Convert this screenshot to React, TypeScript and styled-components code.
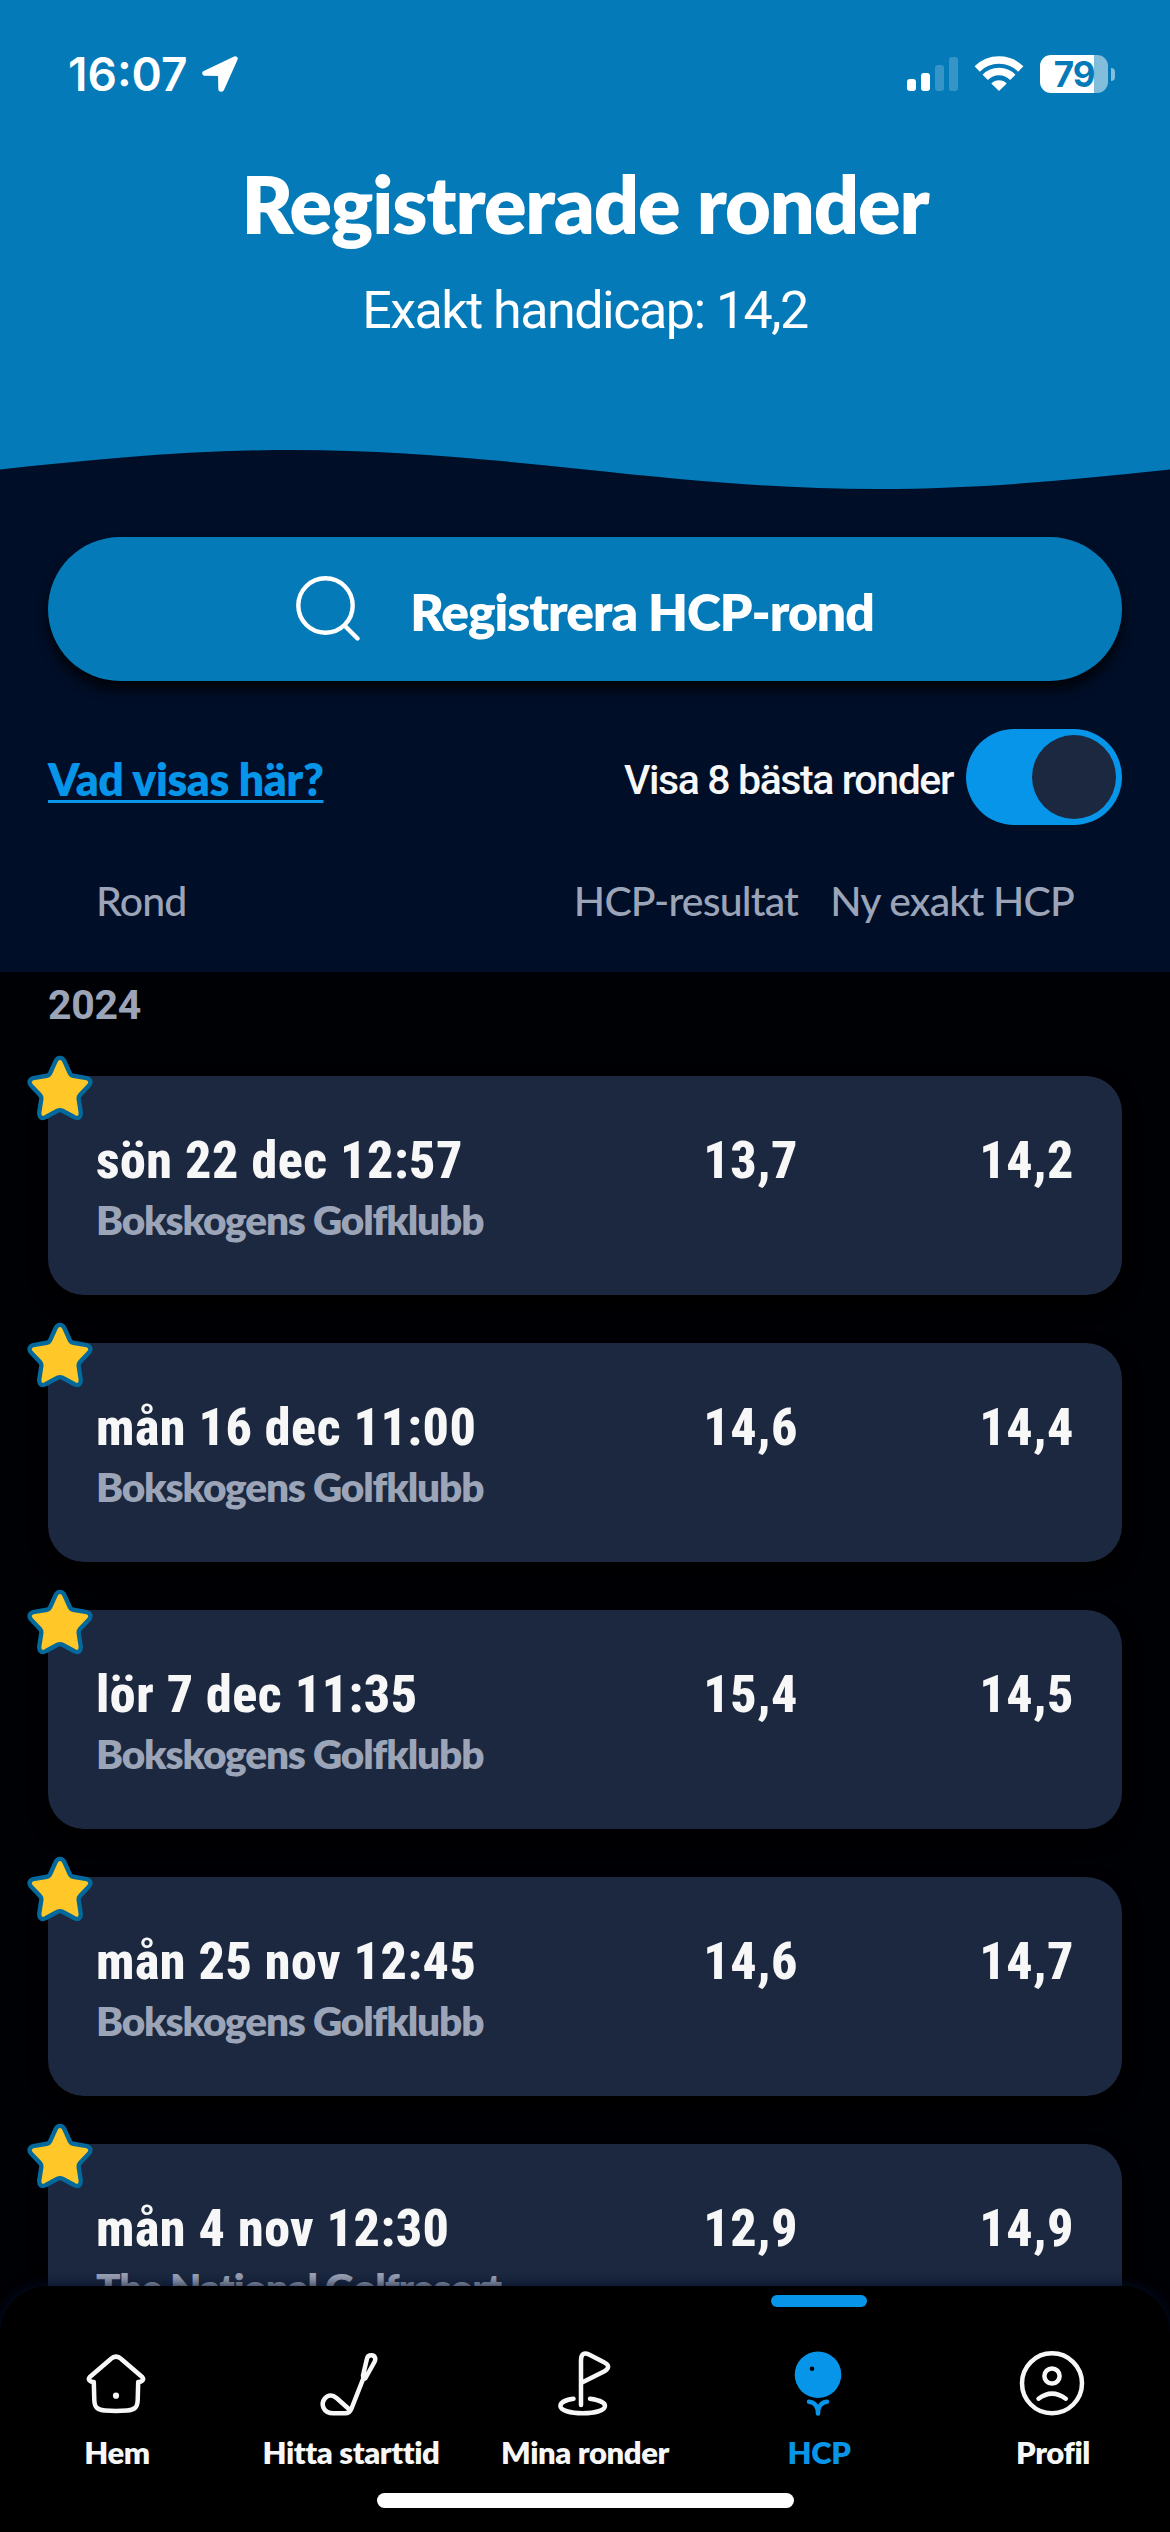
import React from 'react';
import styled, { createGlobalStyle, css } from 'styled-components';

const c = {
  blue: '#047ab8',
  accent: '#0695e8',
  navy: '#000e27',
  night: '#000105',
  card: '#1b283f',
  muted: '#9ca4b8',
  light: '#f7f7f7',
};

const textFont = `Lato, Roboto, 'Liberation Sans', sans-serif`;
const numberFont = `Roboto, 'Liberation Sans', sans-serif`;

const Global = createGlobalStyle`
  *, *::before, *::after { box-sizing: border-box; }
  html, body { margin: 0; padding: 0; background: ${c.night}; }
`;

const Screen = styled.div`
  display: flex;
  flex-direction: column;
  width: 1170px;
  height: 2532px;
  overflow: hidden;
  background: ${c.night};
  color: ${c.light};
  font-family: ${textFont};
`;

const Header = styled.header`
  height: 450px;
  background: ${c.blue};
  color: #fff;
  text-align: center;
`;

const StatusBar = styled.div`
  display: flex;
  align-items: center;
  justify-content: space-between;
  height: 150px;
  padding: 0 55px 2px 68px;
`;

const StatusGroup = styled.div<{ $gap: number }>`
  display: flex;
  align-items: center;
  gap: ${(p) => p.$gap}px;
`;

const Clock = styled.span`
  font: 600 46px/56px Inter, 'Liberation Sans', sans-serif;
`;

const Battery = styled.div`
  display: flex;
  align-items: center;
  gap: 3px;
`;

const BatteryBody = styled.div`
  width: 68px;
  height: 38px;
  border-radius: 11px;
  background: linear-gradient(90deg, #fff 54px, rgba(255, 255, 255, 0.5) 54px);
  color: ${c.blue};
  font: 700 35px/38px Inter, 'Liberation Sans', sans-serif;
  letter-spacing: -1px;
  text-align: center;
`;

const BatteryTip = styled.div`
  width: 4px;
  height: 13px;
  border-radius: 0 4px 4px 0;
  background: rgba(255, 255, 255, 0.5);
`;

const Title = styled.h1`
  margin: 6px 0 0;
  font-size: 79px;
  font-weight: 800;
  letter-spacing: -1.1px;
  line-height: 96px;
`;

const Subtitle = styled.p`
  margin: 29px 0 0;
  font-family: ${numberFont};
  font-size: 52px;
  letter-spacing: -1.5px;
  line-height: 60px;
`;

const Controls = styled.section`
  display: flex;
  flex-direction: column;
  height: 522px;
  background: ${c.navy};
`;

const Wave = styled.svg`
  display: block;
  flex: none;
  width: 1170px;
  height: 39px;
`;

const RegisterButton = styled.button`
  display: flex;
  align-items: center;
  justify-content: center;
  gap: 50px;
  flex: none;
  height: 144px;
  margin: 48px 48px 0;
  padding: 0;
  border: 0;
  border-radius: 72px;
  background: ${c.blue};
  color: #fff;
  font-family: inherit;
  box-shadow: 0 9px 12px rgba(0, 0, 0, 0.75);
`;

const ButtonLabel = styled.span`
  padding-top: 3px;
  font-size: 51.5px;
  font-weight: 800;
  letter-spacing: -1px;
  line-height: 60px;
`;

const FilterRow = styled.div`
  display: flex;
  align-items: center;
  height: 96px;
  margin: 48px 48px 0;
`;

const HelpLink = styled.a`
  margin-right: auto;
  padding-top: 4px;
  color: ${c.accent};
  font-size: 44.5px;
  font-weight: 800;
  letter-spacing: -0.4px;
  line-height: 54px;
  text-decoration: underline;
  text-decoration-thickness: 3px;
  text-underline-offset: 4px;
  text-decoration-skip-ink: none;
`;

const FilterLabel = styled.span`
  padding-top: 5px;
  margin-right: 13px;
  font-family: ${numberFont};
  font-size: 41px;
  font-weight: 500;
  letter-spacing: -1.4px;
  line-height: 48px;
`;

const Toggle = styled.div`
  display: flex;
  justify-content: flex-end;
  width: 156px;
  height: 96px;
  padding: 6px;
  border-radius: 48px;
  background: ${c.accent};
`;

const Knob = styled.div`
  width: 84px;
  height: 84px;
  border-radius: 50%;
  background: ${c.card};
`;

const columns = css`
  display: grid;
  grid-template-columns: minmax(0, 1fr) 300px 276px;
`;

const TableHead = styled.div`
  ${columns}
  margin: 46px 96px 0;
  color: ${c.muted};
  font-size: 41px;
  font-weight: 500;
  letter-spacing: -0.85px;
  line-height: 60px;
`;

const Cell = styled.span<{ $end?: boolean }>`
  text-align: ${(p) => (p.$end ? 'right' : 'left')};
  white-space: nowrap;
`;

const List = styled.main`
  flex: 1;
  min-height: 0;
  overflow: hidden;
  padding: 9px 48px 0;
`;

const Year = styled.h2`
  margin: 0 0 47px;
  color: ${c.muted};
  font-family: ${numberFont};
  font-size: 41px;
  font-weight: 700;
  letter-spacing: -0.3px;
  line-height: 48px;
`;

const Card = styled.article`
  ${columns}
  position: relative;
  height: 219px;
  margin-bottom: 48px;
  padding: 55px 48px 0;
  border-radius: 36px;
  background: ${c.card};
  box-shadow: 0 9px 18px #000;
`;

const StarBadge = styled.svg`
  position: absolute;
  left: -21px;
  top: -21px;
  width: 66px;
  height: 66px;
`;

const When = styled.div`
  font-family: ${numberFont};
  font-size: 52px;
  font-weight: 800;
  font-stretch: 84%;
  letter-spacing: 0.5px;
  line-height: 60px;
  white-space: nowrap;
`;

const Score = styled(When)`
  text-align: right;
`;

const Club = styled.div`
  margin-top: 5px;
  color: ${c.muted};
  font-size: 40.5px;
  font-weight: 800;
  letter-spacing: -1.15px;
  line-height: 48px;
  white-space: nowrap;
`;

const TabBar = styled.nav`
  position: relative;
  display: flex;
  flex-direction: column;
  flex: none;
  height: 246px;
  margin-top: -48px;
  border-radius: 48px 48px 0 0;
  background: #000;
  box-shadow: 0 0 14px ${c.navy};
`;

const Tabs = styled.div`
  display: grid;
  grid-template-columns: repeat(5, 1fr);
`;

const Tab = styled.a<{ $active?: boolean }>`
  display: flex;
  flex-direction: column;
  align-items: center;
  color: ${(p) => (p.$active ? c.accent : c.light)};
`;

const Marker = styled.span<{ $active?: boolean }>`
  width: 96px;
  height: 12px;
  margin: 9px 0 41px;
  border-radius: 6px;
  background: ${(p) => (p.$active ? c.accent : 'transparent')};
`;

const TabIcon = styled.svg`
  width: 72px;
  height: 72px;
  fill: none;
  stroke: currentColor;
  stroke-width: 4.5;
  stroke-linecap: round;
  stroke-linejoin: round;
`;

const TabLabel = styled.span`
  margin-top: 14px;
  font-size: 31px;
  font-weight: 800;
  letter-spacing: -0.4px;
  line-height: 36px;
`;

const HomeIndicator = styled.div`
  width: 417px;
  height: 15px;
  margin: 23px auto 0;
  border-radius: 8px;
  background: #fff;
`;

const rounds = [
  ['sön 22 dec 12:57', 'Bokskogens Golfklubb', '13,7', '14,2'],
  ['mån 16 dec 11:00', 'Bokskogens Golfklubb', '14,6', '14,4'],
  ['lör 7 dec 11:35', 'Bokskogens Golfklubb', '15,4', '14,5'],
  ['mån 25 nov 12:45', 'Bokskogens Golfklubb', '14,6', '14,7'],
  ['mån 4 nov 12:30', 'The National Golfresort', '12,9', '14,9'],
];

const tabs = [
  {
    label: 'Hem',
    icon: (
      <>
        <path d="M12.8 34C9 34 6.5 31.5 8.8 29L29.5 11.2C33 8 37 8 40.5 11.2L61.2 29C63.5 31.5 61 34 57.2 34L56.7 52C56.5 60 53 62 46 62.5C39 63 31 63 24 62.5C17 62 13.5 60 13.3 52Z" />
        <circle cx="35" cy="47.7" r="3.1" fill="currentColor" stroke="none" />
      </>
    ),
  },
  {
    label: 'Hitta starttid',
    icon: (
      <>
        <path d="M48.5 30L36.5 60.5C35.3 63.8 33.5 65.3 30 65.3H18.5C8 65.3 5.5 56 9.8 50.5C13.5 46 18 47 21.5 50L35 62" />
        <path d="M48 27.5L52 10.5C53 6 59.5 6 60.3 10.5C60.4 12 60 13 59.3 14.3L50.5 30Q48.3 32 48 27.5Z" />
      </>
    ),
  },
  {
    label: 'Mina ronder',
    icon: (
      <>
        <path d="M32 57V12C32 6 35 4 40 6.5L55 14.3C60.5 17 60.5 20.5 55 23.5L32 35" />
        <path d="M24.5 50.8C17 51.8 11.4 54.5 11.4 58C11.4 62.3 21 65.3 33.7 65.3S56 62.3 56 58C56 54.5 49 51.8 41 50.8" />
      </>
    ),
  },
  {
    label: 'HCP',
    active: true,
    icon: (
      <>
        <circle cx="35" cy="26.7" r="23.3" fill="currentColor" stroke="none" />
        <circle cx="29" cy="20.7" r="2.3" fill="#000" stroke="none" />
        <path d="M26 53.8C31.5 54.3 35 58.5 35 65.5C35 58.5 38.5 54.3 44 53.8" />
      </>
    ),
  },
  {
    label: 'Profil',
    icon: (
      <>
        <circle cx="35" cy="35.3" r="30" />
        <circle cx="35" cy="28" r="7.6" />
        <path d="M21.5 50.7Q35 40.5 48.8 50.7" />
      </>
    ),
  },
];

export default function App() {
  return (
    <Screen>
      <Global />
      <Header>
        <StatusBar>
          <StatusGroup $gap={14}>
            <Clock>16:07</Clock>
            <svg width="36" height="36" viewBox="0 0 36 36" fill="#fff" stroke="#fff" strokeWidth="5" strokeLinejoin="round">
              <path d="M33.2 2.8L2.8 17.3L18.5 17.5L18.8 33.3L19.6 33.3Z" />
            </svg>
          </StatusGroup>
          <StatusGroup $gap={16}>
            <svg width="51" height="38" viewBox="0 0 51 38" fill="#fff">
              <rect x="0" y="24" width="9" height="12" rx="3" />
              <rect x="14" y="18" width="9" height="18" rx="3" />
              <rect x="28" y="10" width="9" height="26" rx="3" opacity="0.2" />
              <rect x="42" y="2" width="9" height="34" rx="3" opacity="0.2" />
            </svg>
            <svg width="50" height="38" viewBox="0 0 50 38" fill="none" stroke="#fff" strokeWidth="7.5">
              <path d="M3.2 14A31.2 31.2 0 0 1 46.8 14" />
              <path d="M11.2 22.3A19.3 19.3 0 0 1 38.8 22.3" />
              <path d="M25 36L17.3 28.4A11 11 0 0 1 32.7 28.4Z" fill="#fff" stroke="none" />
            </svg>
            <Battery>
              <BatteryBody>79</BatteryBody>
              <BatteryTip />
            </Battery>
          </StatusGroup>
        </StatusBar>
        <Title>Registrerade ronder</Title>
        <Subtitle>Exakt handicap: 14,2</Subtitle>
      </Header>

      <Controls>
        <Wave viewBox="0 0 1170 39" fill={c.blue}>
          <path d="M0 19.5C95.4 9.5 186.6 0 292.5 0C398.4 0 489.6 9.5 585 19.5C680.4 29.5 771.6 39 877.5 39C983.4 39 1074.6 29.5 1170 19.5V0H0Z" />
        </Wave>
        <RegisterButton>
          <svg width="64" height="72" viewBox="0 0 64 72" fill="none" stroke="#fff" strokeWidth="4.4" strokeLinecap="round">
            <circle cx="29.5" cy="32.5" r="27.2" />
            <path d="M49.5 53.5L61.5 65.5" />
          </svg>
          <ButtonLabel>Registrera HCP-rond</ButtonLabel>
        </RegisterButton>
        <FilterRow>
          <HelpLink>Vad visas här?</HelpLink>
          <FilterLabel>Visa 8 bästa ronder</FilterLabel>
          <Toggle role="switch" aria-checked="true">
            <Knob />
          </Toggle>
        </FilterRow>
        <TableHead>
          <Cell>Rond</Cell>
          <Cell $end>HCP-resultat</Cell>
          <Cell $end>Ny exakt HCP</Cell>
        </TableHead>
      </Controls>

      <List>
        <Year>2024</Year>
        {rounds.map(([when, club, result, hcp]) => (
          <Card key={when}>
            <StarBadge viewBox="0 0 66 66">
              <path
                d="M28.6 6.2C30.3 1.8 35.7 1.8 37.4 6.2L43 18.5Q44 20.5 46.2 20.8L58.5 22.8C63.5 23.6 65 27.5 61.5 31L53 40Q51.5 41.7 51.7 44L53.7 57C54.3 62.3 51 64.5 47 62L35.5 55.7Q33 54.5 30.5 55.7L19 62C15 64.5 11.7 62.3 12.3 57L14.3 44Q14.5 41.7 13 40L4.5 31C1 27.5 2.5 23.6 7.5 22.8L19.8 20.8Q22 20.5 23 18.5Z"
                fill="#ffc727"
                stroke="#03689c"
                strokeWidth="4.4"
              />
            </StarBadge>
            <div>
              <When>{when}</When>
              <Club>{club}</Club>
            </div>
            <Score>{result}</Score>
            <Score>{hcp}</Score>
          </Card>
        ))}
      </List>

      <TabBar>
        <Tabs>
          {tabs.map((tab) => (
            <Tab key={tab.label} $active={tab.active}>
              <Marker $active={tab.active} />
              <TabIcon viewBox="0 0 72 72">{tab.icon}</TabIcon>
              <TabLabel>{tab.label}</TabLabel>
            </Tab>
          ))}
        </Tabs>
        <HomeIndicator />
      </TabBar>
    </Screen>
  );
}
